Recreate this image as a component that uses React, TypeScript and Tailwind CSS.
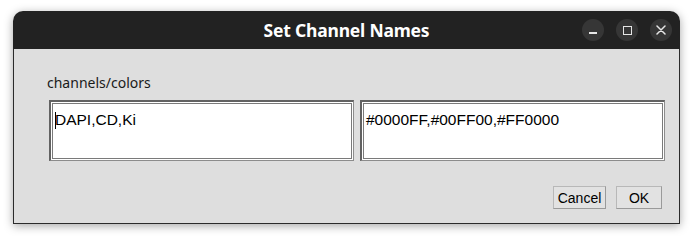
import React from "react";

const sans = { fontFamily: '"Liberation Sans", Arial, sans-serif' };

function TitleButton({ children }: { children: React.ReactNode }) {
  return (
    <div className="w-[22px] h-[22px] rounded-full bg-[#363636] flex items-center justify-center">
      {children}
    </div>
  );
}

function Field({ value, caret }: { value: string; caret?: boolean }) {
  return (
    <div className="w-[305px] h-[61px] border-t-2 border-l-2 border-r border-b border-t-[#626262] border-l-[#626262] border-r-[#8c8c8c] border-b-[#8c8c8c] bg-white p-px">
      <div className="h-full border border-[#7a7a7a] bg-white pl-[2px] pt-[7px]">
        <div className="flex items-center text-[15.5px] leading-[18px] text-black font-['Liberation_Sans',Arial,sans-serif]">
          {caret && <span className="w-px h-[17px] bg-black -mr-px" />}
          <span>{value}</span>
        </div>
      </div>
    </div>
  );
}

function DialogButton({ label, width }: { label: string; width: string }) {
  return (
    <button
      className={`${width} h-[23px] border border-[#9a9a9a] border-t-[#b8b8b8] border-l-[#b8b8b8] bg-[#e2e2e2] text-[14px] leading-none text-black flex items-center justify-center`}
      style={sans}
    >
      {label}
    </button>
  );
}

export default function App() {
  return (
    <div className="w-[693px] h-[240px] bg-white pt-[11px] pl-[13px]">
      <div className="w-[667px] h-[213px] flex flex-col rounded-t-[10px] shadow-[0_2px_10px_rgba(0,0,0,0.35)]">
        {/* Title bar */}
        <div className="relative h-[38px] bg-[#222222] rounded-t-[10px] flex items-center justify-center">
          <span className="text-white text-[17.5px] font-bold font-['Noto_Sans',sans-serif] tracking-[-0.2px] mt-px">
            Set Channel Names
          </span>
          <div className="absolute right-[8px] top-0 h-full flex items-center gap-[12px]">
            <TitleButton>
              <span className="block w-[8px] h-[1.5px] bg-[#e6e6e6] mt-[6px]" />
            </TitleButton>
            <TitleButton>
              <span className="block w-[9px] h-[9px] border-[1.5px] border-[#e6e6e6]" />
            </TitleButton>
            <TitleButton>
              <svg width="10" height="10" viewBox="0 0 10 10">
                <path d="M1 1 L9 9 M9 1 L1 9" stroke="#e6e6e6" strokeWidth="1.5" strokeLinecap="round" />
              </svg>
            </TitleButton>
          </div>
        </div>

        {/* Body */}
        <div className="flex-1 bg-[#dedede] border-x border-b border-[#2b2b2b] flex flex-col">
          <div className="pt-[24px] pl-[33px] text-[14px] leading-[19px] text-[#1a1a1a] font-['Noto_Sans',sans-serif]">
            channels/colors
          </div>
          <div className="mt-[8px] pl-[35px] flex gap-[6px]">
            <Field value="DAPI,CD,Ki" caret />
            <Field value="#0000FF,#00FF00,#FF0000" />
          </div>
          <div className="mt-[25px] pr-[17px] flex justify-end gap-[10px]">
            <DialogButton label="Cancel" width="w-[53px]" />
            <DialogButton label="OK" width="w-[46px]" />
          </div>
        </div>
      </div>
    </div>
  );
}
